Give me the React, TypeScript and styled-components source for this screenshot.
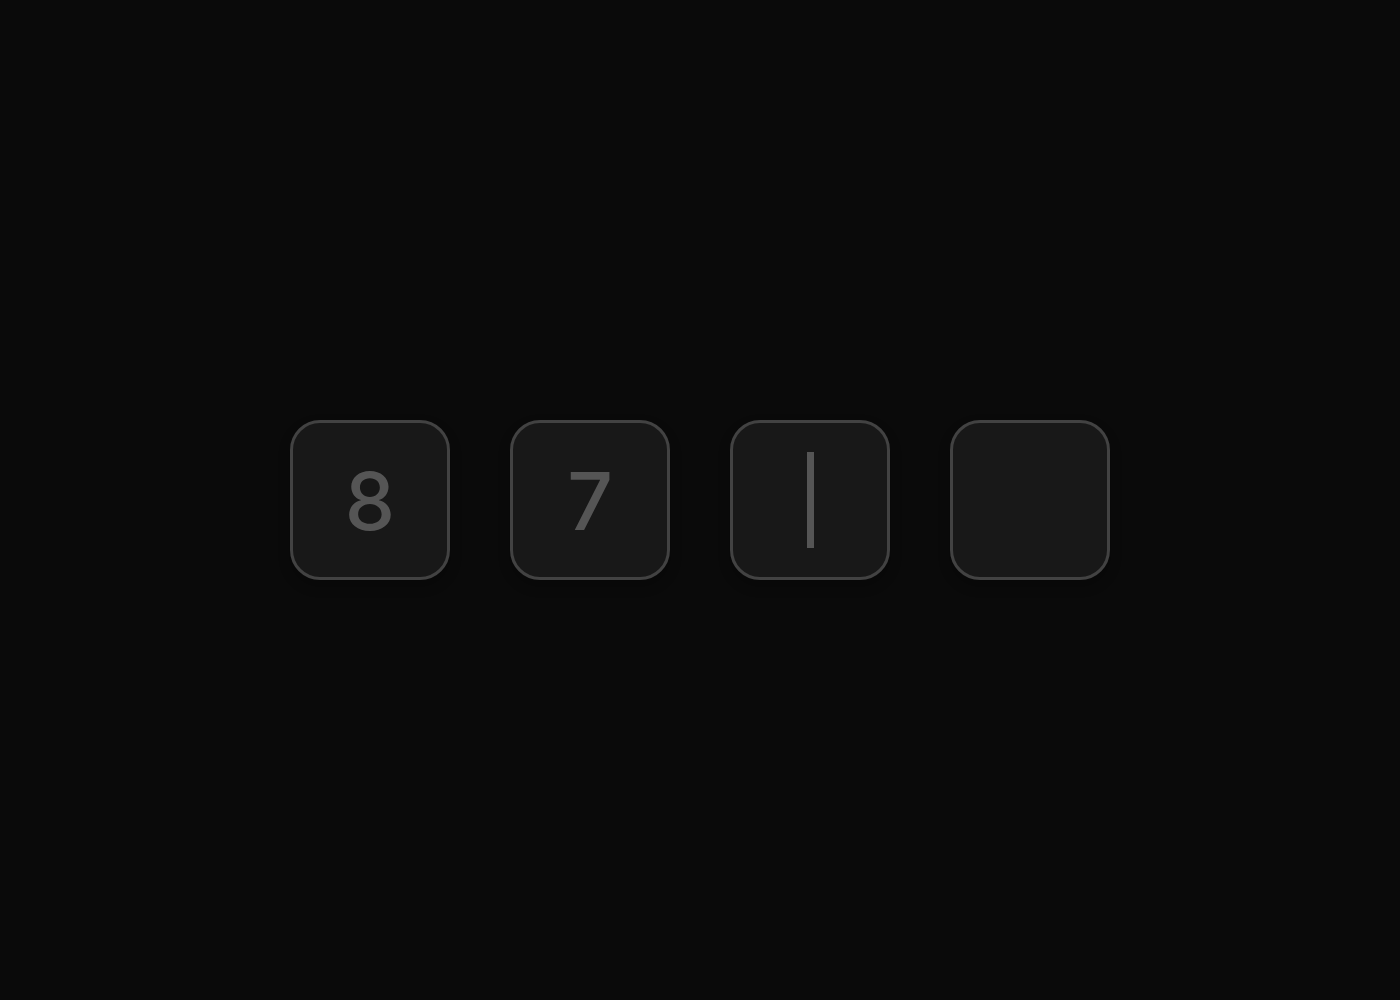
import styled, { createGlobalStyle } from "styled-components";

const GlobalStyle = createGlobalStyle`
  html, body {
    margin: 0;
    padding: 0;
    background: #0a0a0a;
  }
`;

const digits = ["8", "7", "", ""];
const activeIndex = 2;

export default function App() {
  return (
    <>
      <GlobalStyle />
      <Page>
        <CodeRow>
          {digits.map((d, i) => (
            <Cell key={i}>
              {d}
              {i === activeIndex && <Caret />}
            </Cell>
          ))}
        </CodeRow>
      </Page>
    </>
  );
}

const Page = styled.div`
  width: 100%;
  height: 1000px;
  display: flex;
  align-items: center;
  justify-content: center;
  background: #0a0a0a;
`;

const CodeRow = styled.div`
  display: flex;
  gap: 60px;
`;

const Cell = styled.div`
  box-sizing: border-box;
  width: 160px;
  height: 160px;
  border: 3px solid #424242;
  border-radius: 30px;
  background: #181818;
  display: flex;
  align-items: center;
  justify-content: center;
  font-family: Inter, "Noto Sans", sans-serif;
  font-size: 80px;
  font-weight: 500;
  color: #555555;
  box-shadow: 0 6px 12px rgba(0, 0, 0, 0.25);
`;

const Caret = styled.div`
  width: 7px;
  height: 96px;
  background: #555555;
`;
